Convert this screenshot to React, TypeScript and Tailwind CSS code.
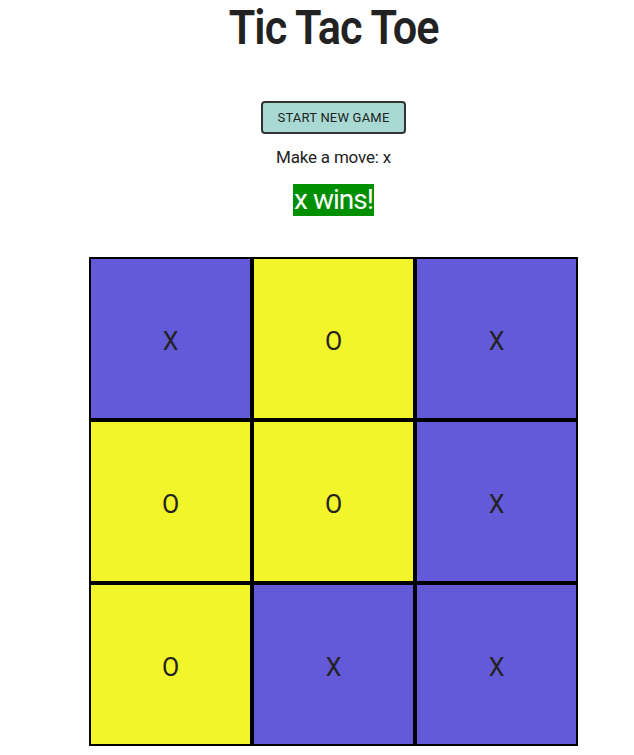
const board = ["x", "o", "x", "o", "o", "x", "o", "x", "x"];

function Cell({value}: {value: string}) {
    const bg = value === "x" ? "bg-[#625ad8]" : "bg-[#f2f52a]";
    return <div className={`${bg} border-2 border-black h-[163px] pt-[6px] flex items-center justify-center text-[25px] text-[#222]`}>
        {value === "x" ? "X" : "O"}
    </div>
}

export default function App() {
    return (
        <div className="pl-[33px] pt-[2px] font-['Roboto',sans-serif] text-[#222]">
            <div className="w-[601px] text-center">
                <h1 className="text-[48px] font-semibold leading-[52px] tracking-[-1px] whitespace-nowrap">
                    <span className="inline-block scale-x-[0.9]">Tic Tac Toe</span>
                </h1>
                <div className="mt-[47px]">
                    <button className="h-[33px] px-[15px] bg-[#a8dad3] border-2 border-[#333] rounded-[4px] text-[13px] uppercase tracking-[0.2px]">
                        Start new game
                    </button>
                </div>
                <p className="mt-[12px] text-[17px] leading-[22px] tracking-[-0.2px]">Make a move: x</p>
                <div className="mt-[16px]">
                    <span className="bg-[#008f00] text-white text-[28px] leading-[32px] inline-block px-[1px] tracking-[-1px]">x wins!</span>
                </div>
            </div>
            <div className="ml-[56px] mt-[41px] w-[489px] grid grid-cols-3">
                {board.map((v, i) => <Cell key={i} value={v}/>)}
            </div>
        </div>
    );
}
